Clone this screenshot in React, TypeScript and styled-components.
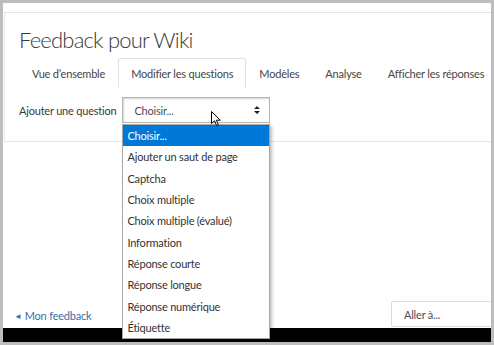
import styled, { createGlobalStyle } from 'styled-components';

const GlobalStyle = createGlobalStyle`
  html, body {
    margin: 0;
    padding: 0;
    background: #ffffff;
  }
  * {
    box-sizing: border-box;
  }
`;

// outer frame of the screenshot
const Frame = styled.div`
  position: relative;
  width: 494px;
  height: 345px;
  border: 3px solid #bdbdbd;
  background: #ffffff;
  display: flex;
  flex-direction: column;
  font-family: 'Lato', 'Open Sans', sans-serif;
  font-size: 11px;
  letter-spacing: -0.2px;
  color: #373a3c;
  overflow: hidden;
`;

const Card = styled.div`
  margin: 9px 0 0 1px;
  height: 130px;
  border: 1px solid #e6e6e6;
  border-right: none;
  padding: 0 0 0 14px;
`;

const Title = styled.h2`
  margin: 14px 0 0;
  font-size: 22px;
  font-weight: 300;
  line-height: 26px;
  letter-spacing: -0.8px;
  color: #373a3c;
`;

const TabList = styled.ul`
  list-style: none;
  margin: 5px 0 0;
  padding: 0;
  display: flex;
  border-bottom: 1px solid #dee2e6;
`;

const Tab = styled.li<{ $active?: boolean }>`
  height: 30px;
  margin-bottom: -1px;
  padding: 0 12px;
  display: flex;
  align-items: center;
  color: #454545;
  white-space: nowrap;
  border: 1px solid ${(p) => (p.$active ? '#dee2e6' : 'transparent')};
  border-bottom-color: ${(p) => (p.$active ? '#ffffff' : 'transparent')};
  border-radius: 3px 3px 0 0;
  background: #ffffff;
`;

const FieldRow = styled.div`
  margin-top: 9px;
  display: flex;
  align-items: center;
  gap: 6px;
`;

const Label = styled.span`
  color: #373a3c;
  white-space: nowrap;
`;

const SelectWrap = styled.div`
  position: relative;
`;

const SelectBox = styled.div<{ $width: number }>`
  width: ${(p) => p.$width}px;
  height: 26px;
  padding: 0 9px 0 11px;
  display: flex;
  align-items: center;
  justify-content: space-between;
  color: #495057;
  background: #ffffff;
  border: 1px solid #b5b5b5;
  box-shadow: inset 1px 1px 2px rgba(0, 0, 0, 0.18);
`;

const Arrows = styled.svg`
  width: 6px;
  height: 8px;
`;

const Dropdown = styled.ul`
  position: absolute;
  left: 0;
  top: 27px;
  z-index: 5;
  width: 148px;
  margin: 0;
  padding: 0;
  list-style: none;
  background: #ffffff;
  border: 1px solid #a8a8a8;
  box-shadow: 2px 2px 3px rgba(0, 0, 0, 0.25);
`;

const Option = styled.li<{ $selected?: boolean }>`
  height: 21.3px;
  padding: 0 4px;
  display: flex;
  align-items: center;
  white-space: nowrap;
  color: ${(p) => (p.$selected ? '#ffffff' : '#333333')};
  background: ${(p) => (p.$selected ? '#0078d7' : 'transparent')};
`;

const Cursor = styled.svg`
  position: absolute;
  left: 89px;
  top: 14px;
  z-index: 6;
  width: 10px;
  height: 15px;
`;

const Spacer = styled.div`
  flex: 1;
`;

const Footer = styled.div`
  height: 26px;
  padding-left: 11px;
  display: flex;
  align-items: center;
  justify-content: space-between;
`;

const BackLink = styled.a`
  color: #3a6ea5;
  text-decoration: none;
  display: flex;
  align-items: center;
  gap: 3px;
  margin-top: 3px;
`;

const BackIcon = styled.span`
  font-size: 8px;
`;

const JumpBox = styled.div`
  width: 103px;
  height: 26px;
  margin-right: -3px;
  padding-left: 12px;
  display: flex;
  align-items: center;
  color: #495057;
  border: 1px solid #dcdce4;
  border-right: none;
  border-radius: 2px 0 0 2px;
`;

const BlackBar = styled.div`
  height: 14px;
  margin-top: 1px;
  background: #000000;
`;

const tabs = [
  'Vue d\u2019ensemble',
  'Modifier les questions',
  'Modèles',
  'Analyse',
  'Afficher les réponses',
];

const options = [
  'Choisir...',
  'Ajouter un saut de page',
  'Captcha',
  'Choix multiple',
  'Choix multiple (évalué)',
  'Information',
  'Réponse courte',
  'Réponse longue',
  'Réponse numérique',
  'Étiquette',
];

const App = () => {
  return (
    <>
      <GlobalStyle />
      <Frame>
        <Card>
          <Title>Feedback pour Wiki</Title>
          <TabList>
            {tabs.map((t, i) => (
              <Tab key={t} $active={i === 1}>
                {t}
              </Tab>
            ))}
          </TabList>
          <FieldRow>
            <Label>Ajouter une question</Label>
            <SelectWrap>
              <SelectBox $width={148}>
                <span>Choisir...</span>
                <Arrows viewBox="0 0 6 8">
                  <path d="M3 0 L6 3 H0 Z M3 8 L6 5 H0 Z" fill="#222" />
                </Arrows>
              </SelectBox>
              <Cursor viewBox="0 0 10 15">
                <path
                  d="M0.5 0.5 V12.5 L3.5 9.8 L5.6 14.5 L7.4 13.7 L5.3 9.2 H9.3 Z"
                  fill="#ffffff"
                  stroke="#000000"
                  strokeWidth="1"
                  strokeLinejoin="round"
                />
              </Cursor>
              <Dropdown>
                {options.map((o, i) => (
                  <Option key={o} $selected={i === 0}>
                    {o}
                  </Option>
                ))}
              </Dropdown>
            </SelectWrap>
          </FieldRow>
        </Card>
        <Spacer />
        <Footer>
          <BackLink href="#">
            <BackIcon>◄</BackIcon>
            Mon feedback
          </BackLink>
          <JumpBox>Aller à...</JumpBox>
        </Footer>
        <BlackBar />
      </Frame>
    </>
  );
};

export default App;
